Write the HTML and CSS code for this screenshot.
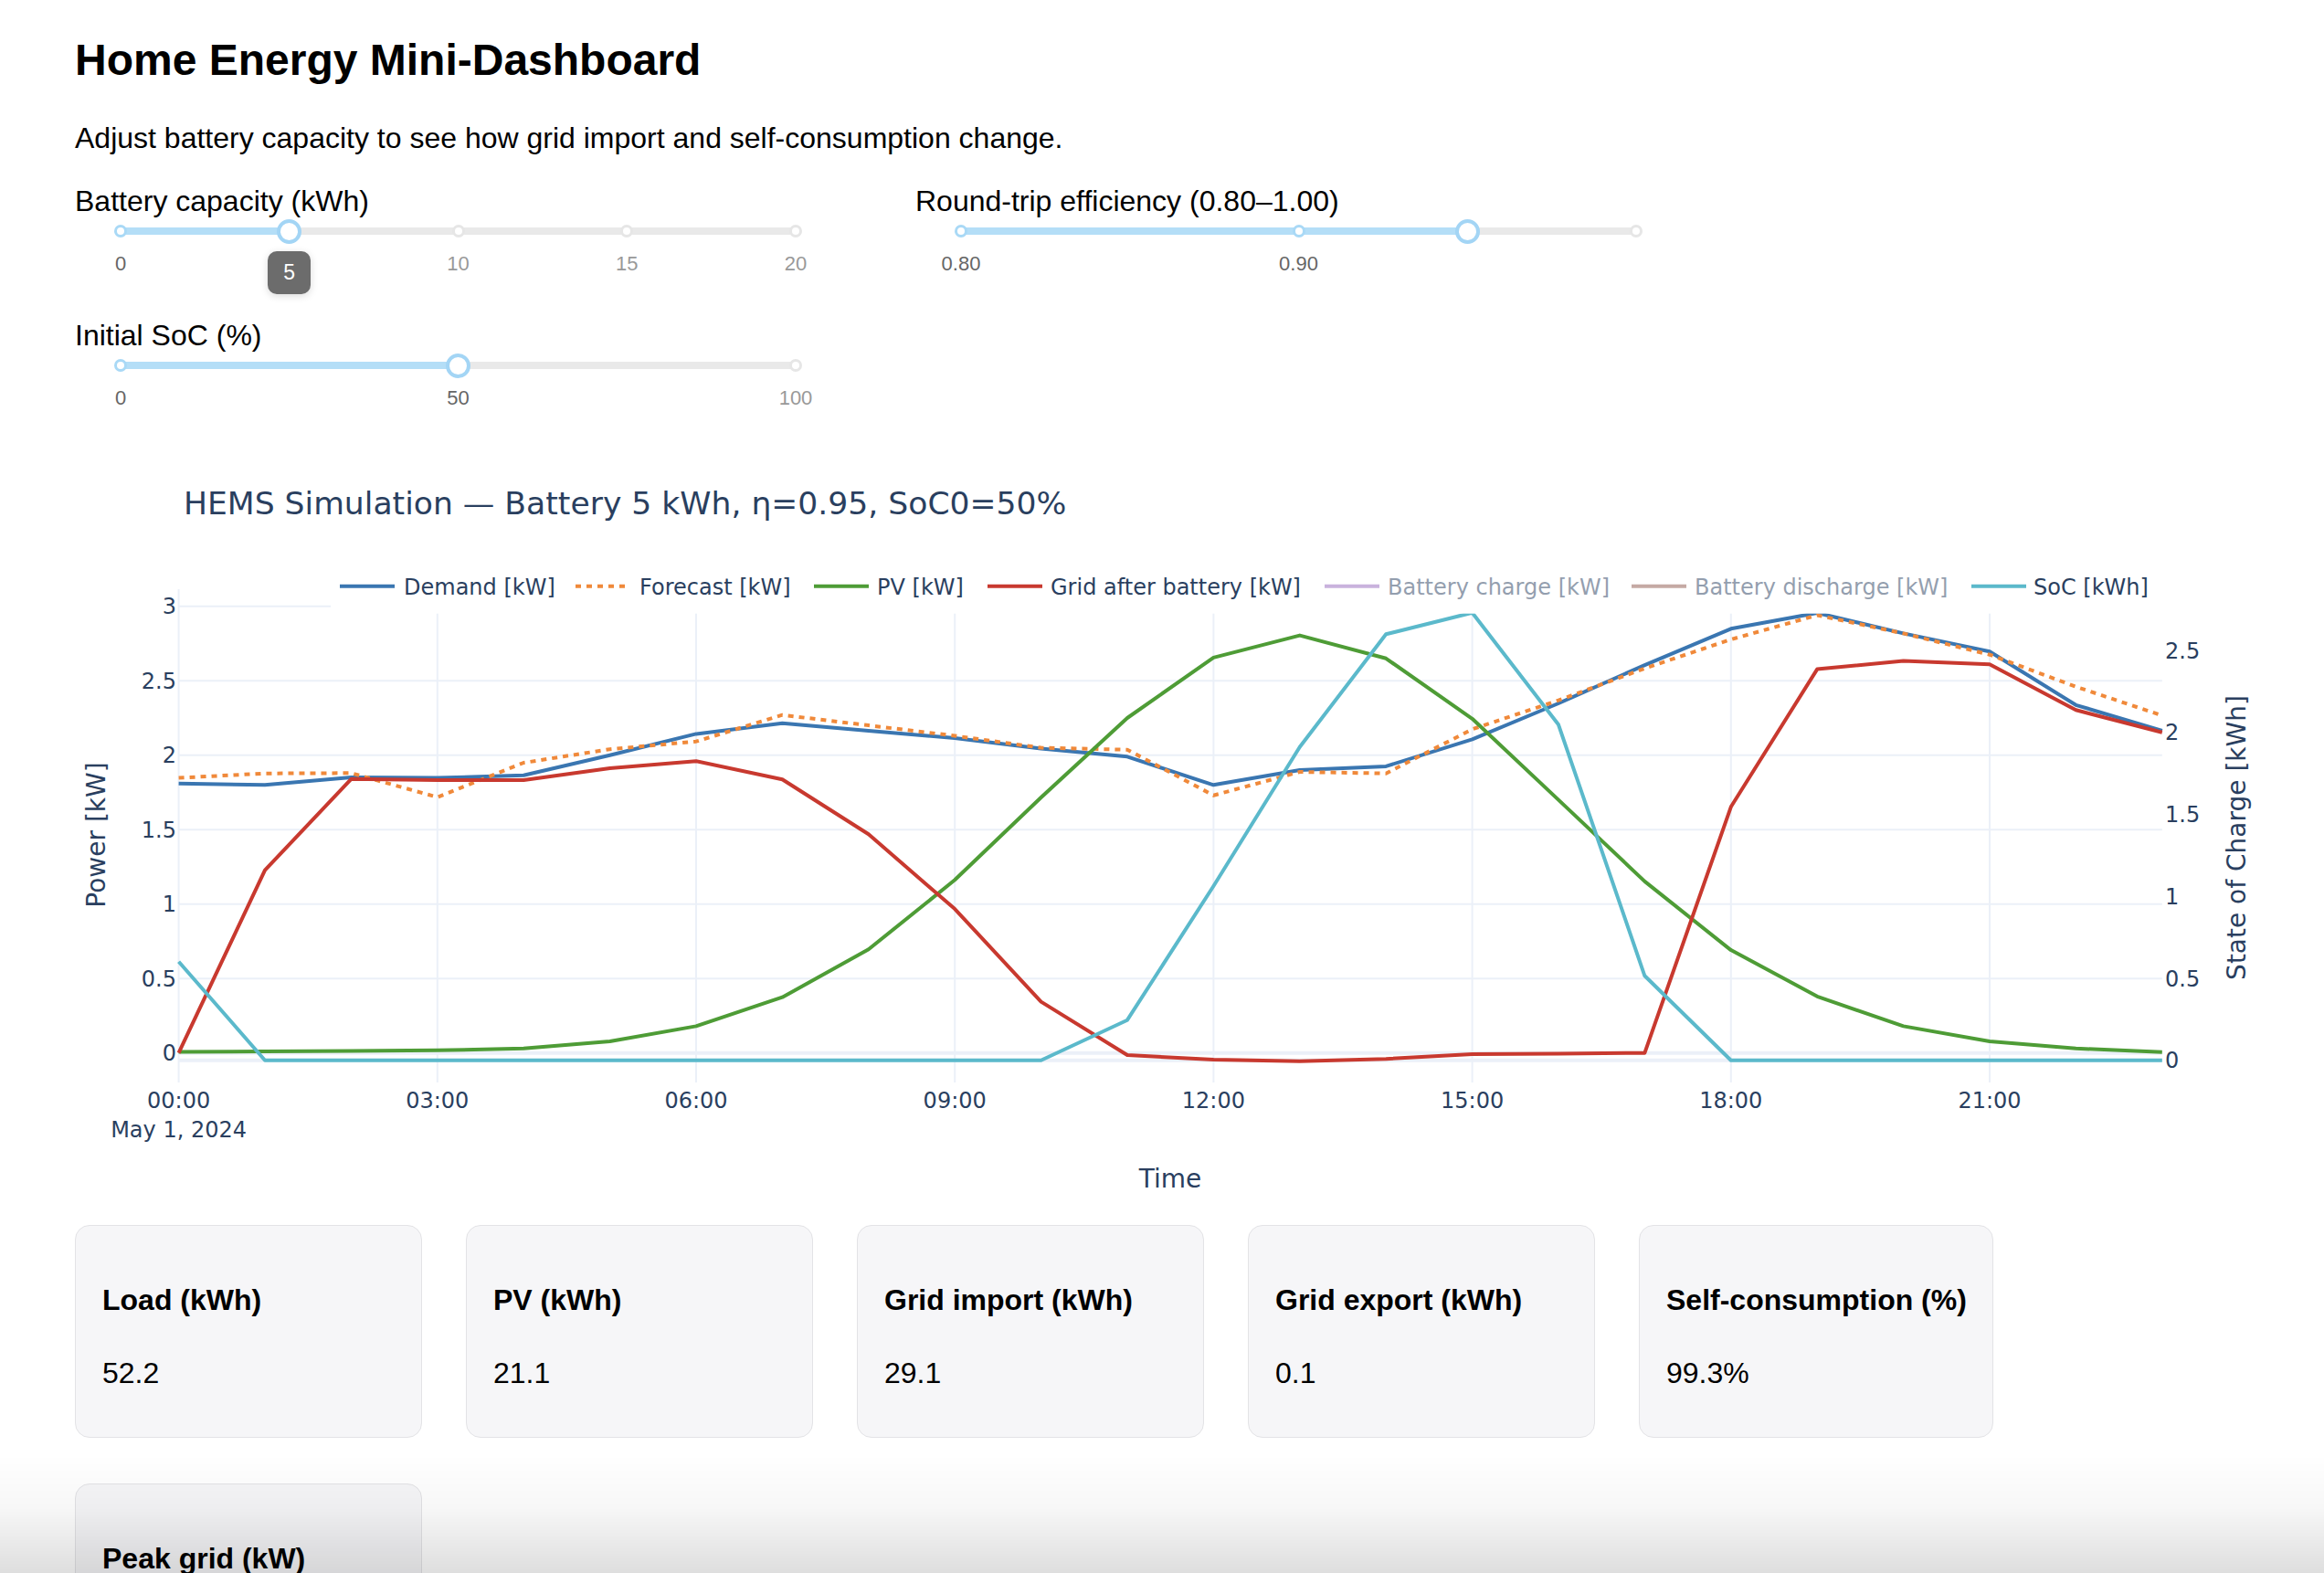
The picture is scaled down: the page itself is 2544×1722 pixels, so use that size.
FILE: index.html
```html
<!DOCTYPE html>
<html lang="en">
<head>
<meta charset="utf-8">
<title>Home Energy Mini-Dashboard</title>
<link rel="stylesheet" href="styles.css">
</head>
<body>
<div class="page">
  <h1 class="title">Home Energy Mini-Dashboard</h1>
  <p class="lead">Adjust battery capacity to see how grid import and self-consumption change.</p>

  <div class="controls">
    <div class="control">
      <div class="control-label">Battery capacity (kWh)</div>
      <div class="slider">
        <div class="rail"><div class="track" style="width:25%"></div></div>
        <span class="dot on" style="left:0%"></span>
        <span class="dot on" style="left:25%"></span>
        <span class="dot" style="left:50%"></span>
        <span class="dot" style="left:75%"></span>
        <span class="dot" style="left:100%"></span>
        <span class="handle" style="left:25%"></span>
        <div class="marks">
          <span class="mark on" style="left:0%">0</span>
          <span class="mark" style="left:50%">10</span>
          <span class="mark" style="left:75%">15</span>
          <span class="mark" style="left:100%">20</span>
        </div>
        <div class="tip" style="left:25%">5</div>
      </div>
    </div>

    <div class="control">
      <div class="control-label">Round-trip efficiency (0.80–1.00)</div>
      <div class="slider">
        <div class="rail"><div class="track" style="width:75%"></div></div>
        <span class="dot on" style="left:0%"></span>
        <span class="dot on" style="left:50%"></span>
        <span class="dot" style="left:100%"></span>
        <span class="handle" style="left:75%"></span>
        <div class="marks">
          <span class="mark on" style="left:0%">0.80</span>
          <span class="mark on" style="left:50%">0.90</span>
        </div>
      </div>
    </div>

    <div class="control">
      <div class="control-label">Initial SoC (%)</div>
      <div class="slider">
        <div class="rail"><div class="track" style="width:50%"></div></div>
        <span class="dot on" style="left:0%"></span>
        <span class="dot on" style="left:50%"></span>
        <span class="dot" style="left:100%"></span>
        <span class="handle" style="left:50%"></span>
        <div class="marks">
          <span class="mark on" style="left:0%">0</span>
          <span class="mark on" style="left:50%">50</span>
          <span class="mark" style="left:100%">100</span>
        </div>
      </div>
    </div>
  </div>

  <div class="chart">
    <svg class="plot" width="2462" height="845" viewBox="82 496 2462 845" xmlns="http://www.w3.org/2000/svg">
      <text class="chart-title" x="201" y="563.3">HEMS Simulation — Battery 5 kWh, η=0.95, SoC0=50%</text>

      <g class="grid">
        <line x1="195.6" y1="645" x2="195.6" y2="1185"/>
        <line x1="478.8" y1="645" x2="478.8" y2="1185"/>
        <line x1="762.0" y1="645" x2="762.0" y2="1185"/>
        <line x1="1045.2" y1="645" x2="1045.2" y2="1185"/>
        <line x1="1328.4" y1="645" x2="1328.4" y2="1185"/>
        <line x1="1611.6" y1="645" x2="1611.6" y2="1185"/>
        <line x1="1894.8" y1="645" x2="1894.8" y2="1185"/>
        <line x1="2178.0" y1="645" x2="2178.0" y2="1185"/>
        <line x1="195.6" y1="1071.2" x2="2366.8" y2="1071.2"/>
        <line x1="195.6" y1="989.7" x2="2366.8" y2="989.7"/>
        <line x1="195.6" y1="908.2" x2="2366.8" y2="908.2"/>
        <line x1="195.6" y1="826.7" x2="2366.8" y2="826.7"/>
        <line x1="195.6" y1="745.2" x2="2366.8" y2="745.2"/>
        <line x1="195.6" y1="663.7" x2="2366.8" y2="663.7"/>
      </g>
      <g class="zero">
        <line x1="195.6" y1="1152.7" x2="2366.8" y2="1152.7"/>
        <line x1="195.6" y1="1160.7" x2="2366.8" y2="1160.7"/>
      </g>

      <g class="traces">
        <polyline id="tr-demand" class="trace c-demand" points=""/>
        <polyline id="tr-forecast" class="trace c-forecast dotted" points=""/>
        <polyline id="tr-pv" class="trace c-pv" points=""/>
        <polyline id="tr-grid" class="trace c-grid" points=""/>
        <polyline id="tr-soc" class="trace c-soc" points=""/>
      </g>

      <g class="legend">
        <rect class="legend-bg" x="362" y="598" width="2006" height="73.7"/>
        <line class="trace c-demand" x1="372" y1="641.7" x2="432" y2="641.7"/>
        <text class="legend-text" x="442" y="651">Demand [kW]</text>
        <line class="trace c-forecast dotted" x1="630" y1="641.7" x2="690" y2="641.7"/>
        <text class="legend-text" x="700" y="651">Forecast [kW]</text>
        <line class="trace c-pv" x1="891" y1="641.7" x2="951" y2="641.7"/>
        <text class="legend-text" x="960" y="651">PV [kW]</text>
        <line class="trace c-grid" x1="1081" y1="641.7" x2="1141" y2="641.7"/>
        <text class="legend-text" x="1150" y="651">Grid after battery [kW]</text>
        <g class="legend-off">
          <line class="trace c-charge" x1="1450" y1="641.7" x2="1510" y2="641.7"/>
          <text class="legend-text" x="1519" y="651">Battery charge [kW]</text>
          <line class="trace c-discharge" x1="1786" y1="641.7" x2="1846" y2="641.7"/>
          <text class="legend-text" x="1855" y="651">Battery discharge [kW]</text>
        </g>
        <line class="trace c-soc" x1="2158" y1="641.7" x2="2218" y2="641.7"/>
        <text class="legend-text" x="2226" y="651">SoC [kWh]</text>
      </g>

      <g class="ticks ticks-left">
        <text x="193" y="1161.2">0</text>
        <text x="193" y="1079.7">0.5</text>
        <text x="193" y="998.2">1</text>
        <text x="193" y="916.7">1.5</text>
        <text x="193" y="835.2">2</text>
        <text x="193" y="753.7">2.5</text>
        <text x="193" y="672.2">3</text>
      </g>
      <g class="ticks ticks-right">
        <text x="2370" y="1169.2">0</text>
        <text x="2370" y="1079.5">0.5</text>
        <text x="2370" y="989.8">1</text>
        <text x="2370" y="900.1">1.5</text>
        <text x="2370" y="810.4">2</text>
        <text x="2370" y="720.7">2.5</text>
      </g>
      <g class="ticks ticks-x">
        <text x="195.6" y="1213">00:00</text>
        <text x="195.6" y="1245">May 1, 2024</text>
        <text x="478.8" y="1213">03:00</text>
        <text x="762.0" y="1213">06:00</text>
        <text x="1045.2" y="1213">09:00</text>
        <text x="1328.4" y="1213">12:00</text>
        <text x="1611.6" y="1213">15:00</text>
        <text x="1894.8" y="1213">18:00</text>
        <text x="2178.0" y="1213">21:00</text>
      </g>

      <text class="axis-title" x="1281" y="1300">Time</text>
      <text class="axis-title" transform="translate(115 914) rotate(-90)">Power [kW]</text>
      <text class="axis-title" transform="translate(2458 917) rotate(-90)">State of Charge [kWh]</text>
    </svg>
  </div>

  <div class="cards">
    <div class="card"><div class="card-title">Load (kWh)</div><div class="card-value">52.2</div></div>
    <div class="card"><div class="card-title">PV (kWh)</div><div class="card-value">21.1</div></div>
    <div class="card"><div class="card-title">Grid import (kWh)</div><div class="card-value">29.1</div></div>
    <div class="card"><div class="card-title">Grid export (kWh)</div><div class="card-value">0.1</div></div>
    <div class="card"><div class="card-title">Self-consumption (%)</div><div class="card-value">99.3%</div></div>
    <div class="card"><div class="card-title">Peak grid (kW)</div><div class="card-value">2.6</div></div>
  </div>
</div>
<div class="bottom-fade"></div>
<script src="chart.js"></script>
</body>
</html>
```

FILE: styles.css
```css
body {
  margin: 0;
  background: #ffffff;
  color: #000000;
  font-family: "Liberation Sans", Arial, Helvetica, sans-serif;
}

.page {
  padding: 0 0 80px 82px;
}

.title {
  margin: 38px 0 0;
  font-size: 48px;
  line-height: 56px;
  font-weight: 700;
}

.lead {
  margin: 39px 0 0;
  font-size: 32px;
  line-height: 37px;
}

.controls {
  display: grid;
  grid-template-columns: 839px 839px;
  column-gap: 81px;
  margin-top: 32px;
}

.control {
  height: 147px;
}

.control-label {
  font-size: 32px;
  line-height: 37px;
}

.slider {
  position: relative;
  margin: 10px 50px 0;
}

.rail {
  position: relative;
  height: 8px;
  border-radius: 4px;
  background: #e9e9e9;
}

.track {
  position: absolute;
  left: 0;
  top: 0;
  height: 100%;
  border-radius: 4px;
  background: #b4def7;
}

.dot {
  position: absolute;
  top: 4px;
  width: 14px;
  height: 14px;
  margin: -7px 0 0 -7px;
  box-sizing: border-box;
  border: 3px solid #e6e6e6;
  border-radius: 50%;
  background: #ffffff;
}

.dot.on {
  border-color: #a9d9f6;
}

.handle {
  position: absolute;
  top: 4px;
  width: 27px;
  height: 27px;
  margin: -13.5px 0 0 -13.5px;
  box-sizing: border-box;
  border: 4px solid #a3d5f5;
  border-radius: 50%;
  background: #ffffff;
}

.marks {
  position: relative;
  height: 24px;
  margin-top: 20px;
  font-size: 22px;
  line-height: 24px;
  color: #999999;
}

.mark {
  position: absolute;
  top: 0;
  transform: translateX(-50%);
  white-space: nowrap;
}

.mark.on {
  color: #666666;
}

.tip {
  position: absolute;
  top: 26px;
  width: 47px;
  height: 47px;
  margin-left: -23.5px;
  display: flex;
  align-items: center;
  justify-content: center;
  border-radius: 10px;
  background: #6c6c6c;
  color: #ffffff;
  font-size: 23px;
  box-shadow: 0 2px 8px rgba(0, 0, 0, 0.15);
}

.chart {
  height: 845px;
}

.plot {
  display: block;
  overflow: visible;
  font-family: "DejaVu Sans", Verdana, sans-serif;
}

.chart-title {
  font-size: 34.6px;
  fill: #2a3f5f;
}

.grid line {
  stroke: #ebf0f8;
  stroke-width: 2;
}

.zero line {
  stroke: #ebf0f8;
  stroke-width: 4;
}

.trace {
  fill: none;
  stroke-width: 4;
  stroke-linejoin: round;
}

.dotted {
  stroke-dasharray: 6 6;
}

.c-demand { stroke: #3a76b1; }
.c-forecast { stroke: #f0893a; }
.c-pv { stroke: #4e9c36; }
.c-grid { stroke: #c8392f; }
.c-charge { stroke: #9467bd; }
.c-discharge { stroke: #8c564b; }
.c-soc { stroke: #5bb9cb; }

.legend-bg {
  fill: #ffffff;
}

.legend-text {
  font-size: 24px;
  fill: #2a3f5f;
}

.legend-off {
  opacity: 0.5;
}

.ticks text {
  font-size: 24px;
  fill: #2a3f5f;
}

.ticks-left text {
  text-anchor: end;
}

.ticks-right text {
  text-anchor: start;
}

.ticks-x text {
  text-anchor: middle;
}

.axis-title {
  font-size: 28px;
  fill: #2a3f5f;
  text-anchor: middle;
}

.cards {
  display: flex;
  flex-wrap: wrap;
  gap: 50px 48px;
}

.card {
  box-sizing: border-box;
  min-width: 380px;
  padding: 63px 28px 51px 29px;
  border: 1px solid #e3e3e6;
  border-radius: 16px;
  background: #f6f6f8;
}

.card-title {
  margin-bottom: 43px;
  font-size: 32px;
  line-height: 37px;
  font-weight: 700;
}

.card-value {
  font-size: 32px;
  line-height: 37px;
}

.bottom-fade {
  position: fixed;
  left: 0;
  right: 0;
  bottom: 0;
  height: 130px;
  pointer-events: none;
  background: linear-gradient(to bottom, rgba(0, 0, 0, 0) 0%, rgba(0, 0, 0, 0.03) 45%, rgba(0, 0, 0, 0.13) 100%);
}
```

FILE: chart.js
```js
(function () {
  var X0 = 195.6, DX = 94.4;
  function x(h) { return X0 + DX * h; }
  function yl(v) { return 1152.7 - 163 * v; }
  function yr(v) { return 1160.7 - 179.4 * v; }

  var series = [
    { id: 'tr-demand', y: yl, data: [1.81, 1.80, 1.851, 1.847, 1.865, 2.0, 2.143, 2.215, 2.164, 2.115, 2.045, 1.99, 1.80, 1.90, 1.925, 2.107, 2.348, 2.605, 2.849, 2.955, 2.818, 2.696, 2.337, 2.164] },
    { id: 'tr-forecast', y: yl, data: [1.847, 1.877, 1.88, 1.718, 1.949, 2.04, 2.092, 2.27, 2.2, 2.13, 2.05, 2.037, 1.73, 1.888, 1.877, 2.174, 2.368, 2.583, 2.777, 2.94, 2.818, 2.675, 2.46, 2.266] },
    { id: 'tr-pv', y: yl, data: [0.008, 0.01, 0.013, 0.018, 0.03, 0.078, 0.18, 0.374, 0.696, 1.162, 1.716, 2.25, 2.655, 2.804, 2.65, 2.245, 1.70, 1.152, 0.691, 0.38, 0.18, 0.078, 0.03, 0.006] },
    { id: 'tr-grid', y: yl, data: [0, 1.227, 1.84, 1.833, 1.833, 1.912, 1.96, 1.837, 1.469, 0.967, 0.344, -0.014, -0.045, -0.055, -0.04, -0.008, -0.004, 0, 1.653, 2.577, 2.634, 2.61, 2.303, 2.153] },
    { id: 'tr-soc', y: yr, data: [0.602, 0, 0, 0, 0, 0, 0, 0, 0, 0, 0, 0.245, 1.063, 1.912, 2.6, 2.731, 2.048, 0.515, 0, 0, 0, 0, 0, 0] }
  ];

  series.forEach(function (s) {
    var el = document.getElementById(s.id);
    if (!el) { return; }
    var pts = s.data.map(function (v, i) {
      return x(i).toFixed(1) + ',' + s.y(v).toFixed(1);
    }).join(' ');
    el.setAttribute('points', pts);
  });
})();
```
